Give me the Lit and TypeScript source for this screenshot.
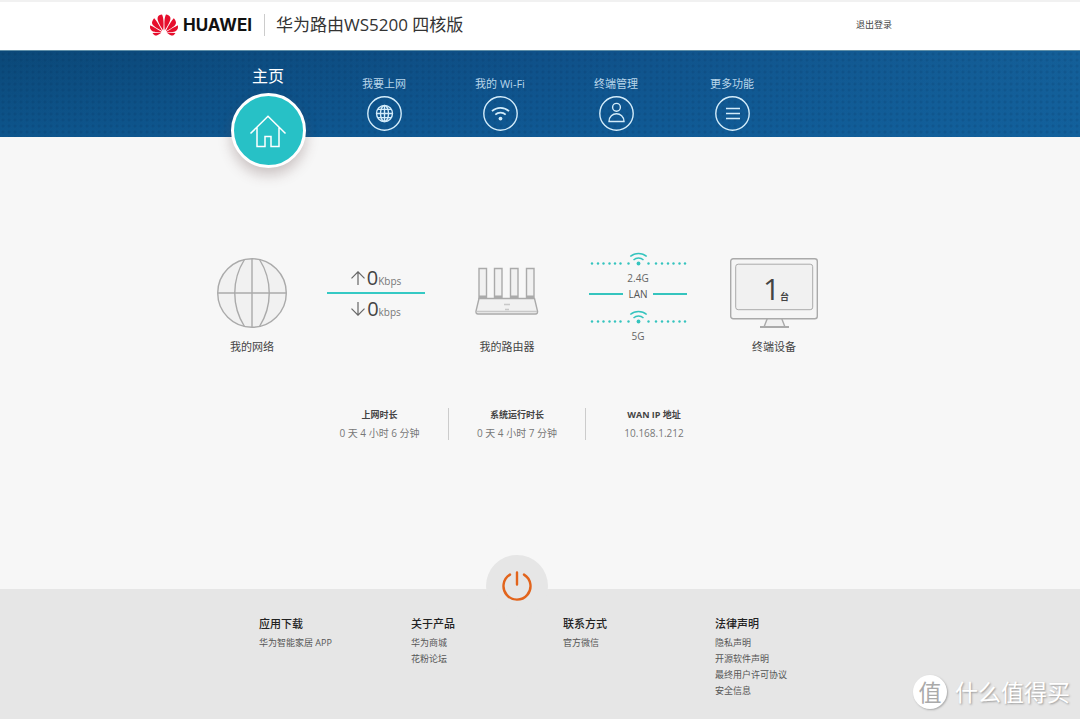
import { LitElement, html, css, svg } from "lit";
import { customElement, property } from "lit/decorators.js";

const navIcons: Record<string, unknown> = {
  globe: svg`<circle cx="17.5" cy="17.5" r="8"/><ellipse cx="17.5" cy="17.5" rx="4" ry="8"/><path d="M17.5 9.5v16M9.5 17.5h16M10.8 13.4h13.4M10.8 21.6h13.4"/>`,
  wifi: svg`<path d="M9 15.2a12.4 12.4 0 0 1 17 0M12.3 18.6a7.6 7.6 0 0 1 10.4 0" stroke-width="1.8"/><circle cx="17.5" cy="22.6" r="1.9" fill="currentColor" stroke="none"/>`,
  user: svg`<circle cx="17.5" cy="11.3" r="3.9"/><path d="M10 25.5c0-10.400 15-10.400 15 0z"/>`,
  menu: svg`<path d="M11 12.500h14M11 17.500h14M11 22.500h14" stroke-width="1.700"/>`,
};

@customElement("nav-item")
export class NavItem extends LitElement {
  @property() label = "";
  @property() icon = "";

  static styles = css`
    :host { display: block; }
    .link { display: flex; flex-direction: column; align-items: center; gap: 4px; padding: 25px 0 6px; color: #b9d6ea; text-decoration: none; font-size: 11px; line-height: 16px; }
    .icon { display: block; width: 35px; height: 35px; color: #d3ecfa; fill: none; stroke: currentColor; stroke-width: 1.4; }
    .home { gap: 6px; padding: 14px 0 0; margin-bottom: -31px; color: #fff; font-size: 16px; line-height: 22px; }
    .disc { box-sizing: border-box; display: grid; place-items: center; width: 75px; height: 75px; border: 3px solid #fff; border-radius: 50%; background: #27c1c6; box-shadow: 0 7px 13px rgba(90, 60, 60, 0.28); }
    .house { width: 38px; height: 36px; fill: none; stroke: #fff; stroke-width: 1.5; stroke-linejoin: miter; }
  `;

  render() {
    if (this.icon === "home") {
      return html`<a class="link home" href="#home" aria-current="page">
        <span>${this.label}</span>
        <span class="disc"><svg class="house" viewBox="0 0 38 36"><path d="M1.500 20.500 19 3.300 36.500 20.500M8 14.500v19h8V23.500h6v10h8v-19"/></svg></span>
      </a>`;
    }
    return html`<a class="link" href="#${this.icon}">
      <span>${this.label}</span>
      <svg class="icon" viewBox="0 0 35 35"><circle cx="17.5" cy="17.5" r="16.7"/>${navIcons[this.icon]}</svg>
    </a>`;
  }
}

@customElement("wireless-band")
export class WirelessBand extends LitElement {
  @property() label = "";

  static styles = css`
    :host { display: block; text-align: center; font-size: 10px; line-height: 16px; color: #666; }
    .signal { display: block; width: 98px; height: 16px; fill: none; stroke: #35c4be; stroke-width: 1.5; }
    .dot { fill: #35c4be; stroke: none; }
    .name { display: block; padding-top: 2px; }
  `;

  render() {
    const dots = [3, 9, 14.5, 20.5, 26, 31.5, 39.500, 59.500, 67, 73, 79, 84.500, 90.500, 96];
    return html`<svg class="signal" viewBox="0 0 98 16">
        ${dots.map((x) => svg`<circle class="dot" cx=${x} cy="11.500" r="1.200"/>`)}
        <circle class="dot" cx="49.500" cy="11.500" r="1.900"/>
        <path d="M41.300 4.500a12.500 12.500 0 0 1 16.400 0M44.500 8a7.500 7.500 0 0 1 10 0"/>
      </svg><span class="name">${this.label}</span>`;
  }
}

const footerColumns = [
  { title: "应用下载", links: ["华为智能家居 APP"] },
  { title: "关于产品", links: ["华为商城", "花粉论坛"] },
  { title: "联系方式", links: ["官方微信"] },
  { title: "法律声明", links: ["隐私声明", "开源软件声明", "最终用户许可协议", "安全信息"] },
];

const stats = [
  { name: "上网时长", value: "0 天 4 小时 6 分钟" },
  { name: "系统运行时长", value: "0 天 4 小时 7 分钟" },
  { name: "WAN IP 地址", value: "10.168.1.212" },
];

@customElement("app-root")
export class AppRoot extends LitElement {
  static styles = css`
    :host { position: relative; display: flex; flex-direction: column; min-height: 100vh; background: #f7f7f7; color: #555; font-family: "Open Sans", "Noto Sans CJK SC", sans-serif; font-size: 11px; line-height: 16px; }
    a { color: inherit; text-decoration: none; }
    .band { box-sizing: border-box; padding-right: 38px; }
    .wrap { box-sizing: border-box; max-width: 742px; margin: 0 auto; }

    .top { background: #fff; border-top: 2px solid #f1f1f1; padding-bottom: 2px; }
    .top .wrap { display: flex; align-items: center; height: 46px; }
    .flower { width: 28px; height: 22px; fill: #e60f2d; }
    .brand { margin-left: 5px; color: #111; font: 700 17px/20px Inter, sans-serif; }
    .title { margin: 0 0 0 12px; padding-left: 11px; border-left: 1px solid #ccc; color: #333; font-size: 17px; font-weight: 400; line-height: 22px; }
    .logout { margin-left: auto; color: #444; font-size: 9px; }

    .menu { border-top: 1px solid #5f8fa8; background: radial-gradient(circle, rgba(4, 40, 80, 0.14) 1px, transparent 2px) 0 0 / 6px 6px, linear-gradient(transparent, rgba(16, 98, 160, 0.5)), linear-gradient(90deg, #0b4878, #0f5088 50%, #145f98); }
    .items { display: grid; grid-template-columns: repeat(5, 116px); padding-left: 60px; height: 86px; }

    main { flex: 1; padding-top: 115px; }
    .diagram { display: grid; grid-template-columns: 150px 98px 164px 98px 174px; justify-content: center; padding-right: 4px; }
    .node { display: flex; flex-direction: column; align-items: center; gap: 11px; margin: 0; padding-top: 6px; color: #444; }
    .art { display: block; height: 70px; fill: #f1f1f1; stroke: #aaa; stroke-width: 1.4; }
    .screen { display: grid; justify-items: center; }
    .screen > * { grid-area: 1 / 1; }
    .count { display: flex; align-items: baseline; padding: 16px 0 0 4px; color: #444; font-size: 30px; line-height: 30px; }
    .count small { font-size: 9px; font-weight: 700; line-height: 12px; }

    .speed { padding-top: 12px; }
    .rate { display: flex; align-items: baseline; justify-content: center; height: 28px; color: #777; font-size: 10px; line-height: 28px; }
    .rate b { margin-left: 2px; color: #444; font-size: 20px; font-weight: 400; }
    .up { border-bottom: 2px solid #35c9c4; }
    .down { padding-top: 1px; }
    .arrow { width: 14px; height: 14px; fill: none; stroke: #666; stroke-width: 1.2; }
    .links { display: flex; flex-direction: column; }
    .lan { display: flex; align-items: center; gap: 5px; margin-bottom: 8px; color: #555; font-size: 10px; }
    .lan::before, .lan::after { content: ""; flex: 1; height: 2px; background: #35c4be; }

    .stats { display: grid; grid-template-columns: repeat(3, 137px); justify-content: center; margin-top: 53px; padding-right: 9px; text-align: center; }
    .stat { display: flex; flex-direction: column; gap: 4px; line-height: 14px; }
    .stat + .stat { border-left: 1px solid #ccc; }
    .stat dt { color: #444; font-size: 9px; font-weight: 700; }
    .stat dd { margin: 0; color: #777; font-size: 10px; }

    footer { background: #e6e6e6; padding-bottom: 20px; }
    .power { display: grid; place-items: center; width: 62px; height: 62px; margin: -34px auto -1px; padding: 0; border: 0; border-radius: 50%; background: #e6e6e6; }
    .power svg { width: 32px; height: 32px; fill: none; stroke: #e2641c; stroke-width: 2.4; stroke-linecap: round; }
    .power-row { padding-right: 9px; }
    .sitemap { display: grid; grid-template-columns: repeat(4, 152px); padding-left: 109px; }
    .sitemap h2 { margin: 0 0 3px; color: #222; font-size: 11px; font-weight: 500; line-height: 16px; }
    .sitemap ul { margin: 0; padding: 0; list-style: none; color: #555; font-size: 9px; }
    .sitemap a { display: block; }

    .mark { position: absolute; right: 10px; bottom: 10px; display: flex; align-items: center; gap: 8px; color: #fff; font-size: 23px; line-height: 34px; text-shadow: 1px 1px 2px #999; }
    .seal { display: grid; place-items: center; width: 34px; height: 34px; border-radius: 50%; background: #fff; color: #aaa; box-shadow: 1px 1px 2px #aaa; text-shadow: none; }
  `;

  render() {
    return html`
      <header class="band top">
        <div class="wrap">
          <svg class="flower" viewBox="0 3 24 18" aria-hidden="true"><path d="M3.67 6.14S1.82 7.91 1.72 9.78v.35c.08 1.51 1.22 2.4 1.22 2.4 1.83 1.79 6.26 4.04 7.3 4.55 0 0 .06.03.1-.01l.02-.04v-.04C7.52 10.8 3.67 6.14 3.67 6.14zM9.65 18.6c-.02-.08-.1-.08-.1-.08l-7.38.26c.8 1.43 2.15 2.53 3.56 2.2.96-.25 3.16-1.78 3.88-2.3.06-.05.04-.09.04-.09zm.08-.78C6.49 15.63.21 12.28.21 12.28c-.15.46-.2.9-.21 1.3v.07c0 1.07.4 1.82.4 1.82.8 1.69 2.34 2.2 2.34 2.2.7.3 1.4.31 1.4.31.12.02 4.4 0 5.54 0 .05 0 .08-.05.08-.05v-.06c0-.03-.03-.05-.03-.05zM9.06 3.19a3.42 3.42 0 00-2.57 3.15v.41c.03.6.16 1.05.16 1.05.66 2.9 3.86 7.65 4.55 8.65.05.05.1.03.1.03a.1.1 0 00.06-.1c1.06-10.6-1.11-13.42-1.11-13.42-.32.02-1.19.23-1.19.23zm8.299 2.27s-.49-1.8-2.44-2.28c0 0-.57-.14-1.17-.22 0 0-2.18 2.81-1.12 13.43.01.07.06.08.06.08.07.03.1-.03.1-.03.72-1.03 3.9-5.76 4.55-8.64 0 0 .36-1.4.02-2.34zm-2.92 13.07s-.07 0-.09.05c0 0-.01.07.03.1.7.51 2.85 2 3.88 2.3 0 0 .16.05.43.06h.14c.69-.02 1.9-.37 3-2.26l-7.4-.25zm7.83-8.41c.14-2.06-1.94-3.97-1.94-3.98 0 0-3.85 4.66-6.67 10.8 0 0-.03.08.02.13l.04.01h.06c1.06-.53 5.46-2.77 7.28-4.54 0 0 1.15-.93 1.21-2.42zm1.52 2.14s-6.28 3.37-9.52 5.55c0 0-.05.04-.03.11 0 0 .03.06.07.06 1.16 0 5.56 0 5.67-.02 0 0 .57-.02 1.27-.29 0 0 1.56-.5 2.37-2.27 0 0 .73-1.45.17-3.14z"/></svg>
          <span class="brand">HUAWEI</span>
          <h1 class="title">华为路由WS5200 四核版</h1>
          <a class="logout" href="#logout">退出登录</a>
        </div>
      </header>

      <nav class="band menu">
        <div class="wrap items">
          <nav-item label="主页" icon="home"></nav-item>
          <nav-item label="我要上网" icon="globe"></nav-item>
          <nav-item label="我的 Wi-Fi" icon="wifi"></nav-item>
          <nav-item label="终端管理" icon="user"></nav-item>
          <nav-item label="更多功能" icon="menu"></nav-item>
        </div>
      </nav>

      <main class="band">
        <section class="wrap diagram">
          <figure class="node">
            <svg class="art" width="70" viewBox="0 0 70 70"><circle cx="35" cy="35" r="34.300"/><path fill="none" d="M35 1v68M1 35h68M27.500 1.500C14.500 22 14.500 48 27.500 68.500M42.500 1.500C55.500 22 55.500 48 42.500 68.500"/></svg>
            <figcaption>我的网络</figcaption>
          </figure>
          <div class="speed">
            <div class="rate up"><svg class="arrow" viewBox="0 0 14 14"><path d="M7 14V1M.5 7.300 7 .8l6.500 6.500"/></svg><b>0</b>Kbps</div>
            <div class="rate down"><svg class="arrow" viewBox="0 0 14 14"><path d="M7 0v13M.5 6.700 7 13.200l6.500-6.500"/></svg><b>0</b>kbps</div>
          </div>
          <figure class="node">
            <svg class="art" width="64" viewBox="0 0 64 70">
              <path d="M4 10.500h7.500v30H4zM19.500 10.500h7.500v30h-7.500zM35.500 10.500h7.500v30h-7.500zM51.500 10.500h7.500v30h-7.500z"/>
              <path d="M4 37.500h7.500v3H4zM19.500 37.500h7.500v3h-7.500zM35.500 37.500h7.500v3h-7.500zM51.500 37.500h7.500v3h-7.500z" fill="#aaa" stroke="none"/>
              <path d="M4 40.500h55.500l3 12.500q.3 3-2 3h-57.500q-2.300 0-2-3z"/>
              <path d="M2 53.500h60" stroke="#c8c8c8"/><path d="M29 46.500h6M30 51.500h4" stroke="#c8c8c8"/>
            </svg>
            <figcaption>我的路由器</figcaption>
          </figure>
          <div class="links">
            <wireless-band label="2.4G"></wireless-band>
            <div class="lan">LAN</div>
            <wireless-band label="5G"></wireless-band>
          </div>
          <figure class="node">
            <div class="screen">
              <svg class="art" width="88" viewBox="0 0 88 70"><path d="M37.500 60 34 69h21L51.500 60" /><path d="M30 69h29" stroke-width="2"/><rect x=".7" y=".7" width="86.600" height="60" rx="2.500" fill="#f5f5f5"/><rect x="5.700" y="6.200" width="77" height="45.500" rx="2.500" stroke-width="1"/></svg>
              <div class="count">1<small>台</small></div>
            </div>
            <figcaption>终端设备</figcaption>
          </figure>
        </section>

        <dl class="wrap stats">
          ${stats.map((s) => html`<div class="stat"><dt>${s.name}</dt><dd>${s.value}</dd></div>`)}
        </dl>
      </main>

      <footer class="band">
        <div class="wrap">
          <div class="power-row">
            <button class="power" type="button" aria-label="电源"><svg viewBox="0 0 32 32"><path d="M16 2.500v12M9 4.600a13.500 13.500 0 1 0 14 0"/></svg></button>
          </div>
          <div class="sitemap">
            ${footerColumns.map((c) => html`<section>
              <h2>${c.title}</h2>
              <ul>${c.links.map((l) => html`<li><a href="#">${l}</a></li>`)}</ul>
            </section>`)}
          </div>
        </div>
      </footer>

      <div class="mark"><span class="seal">值</span><span>什么值得买</span></div>
    `;
  }
}
